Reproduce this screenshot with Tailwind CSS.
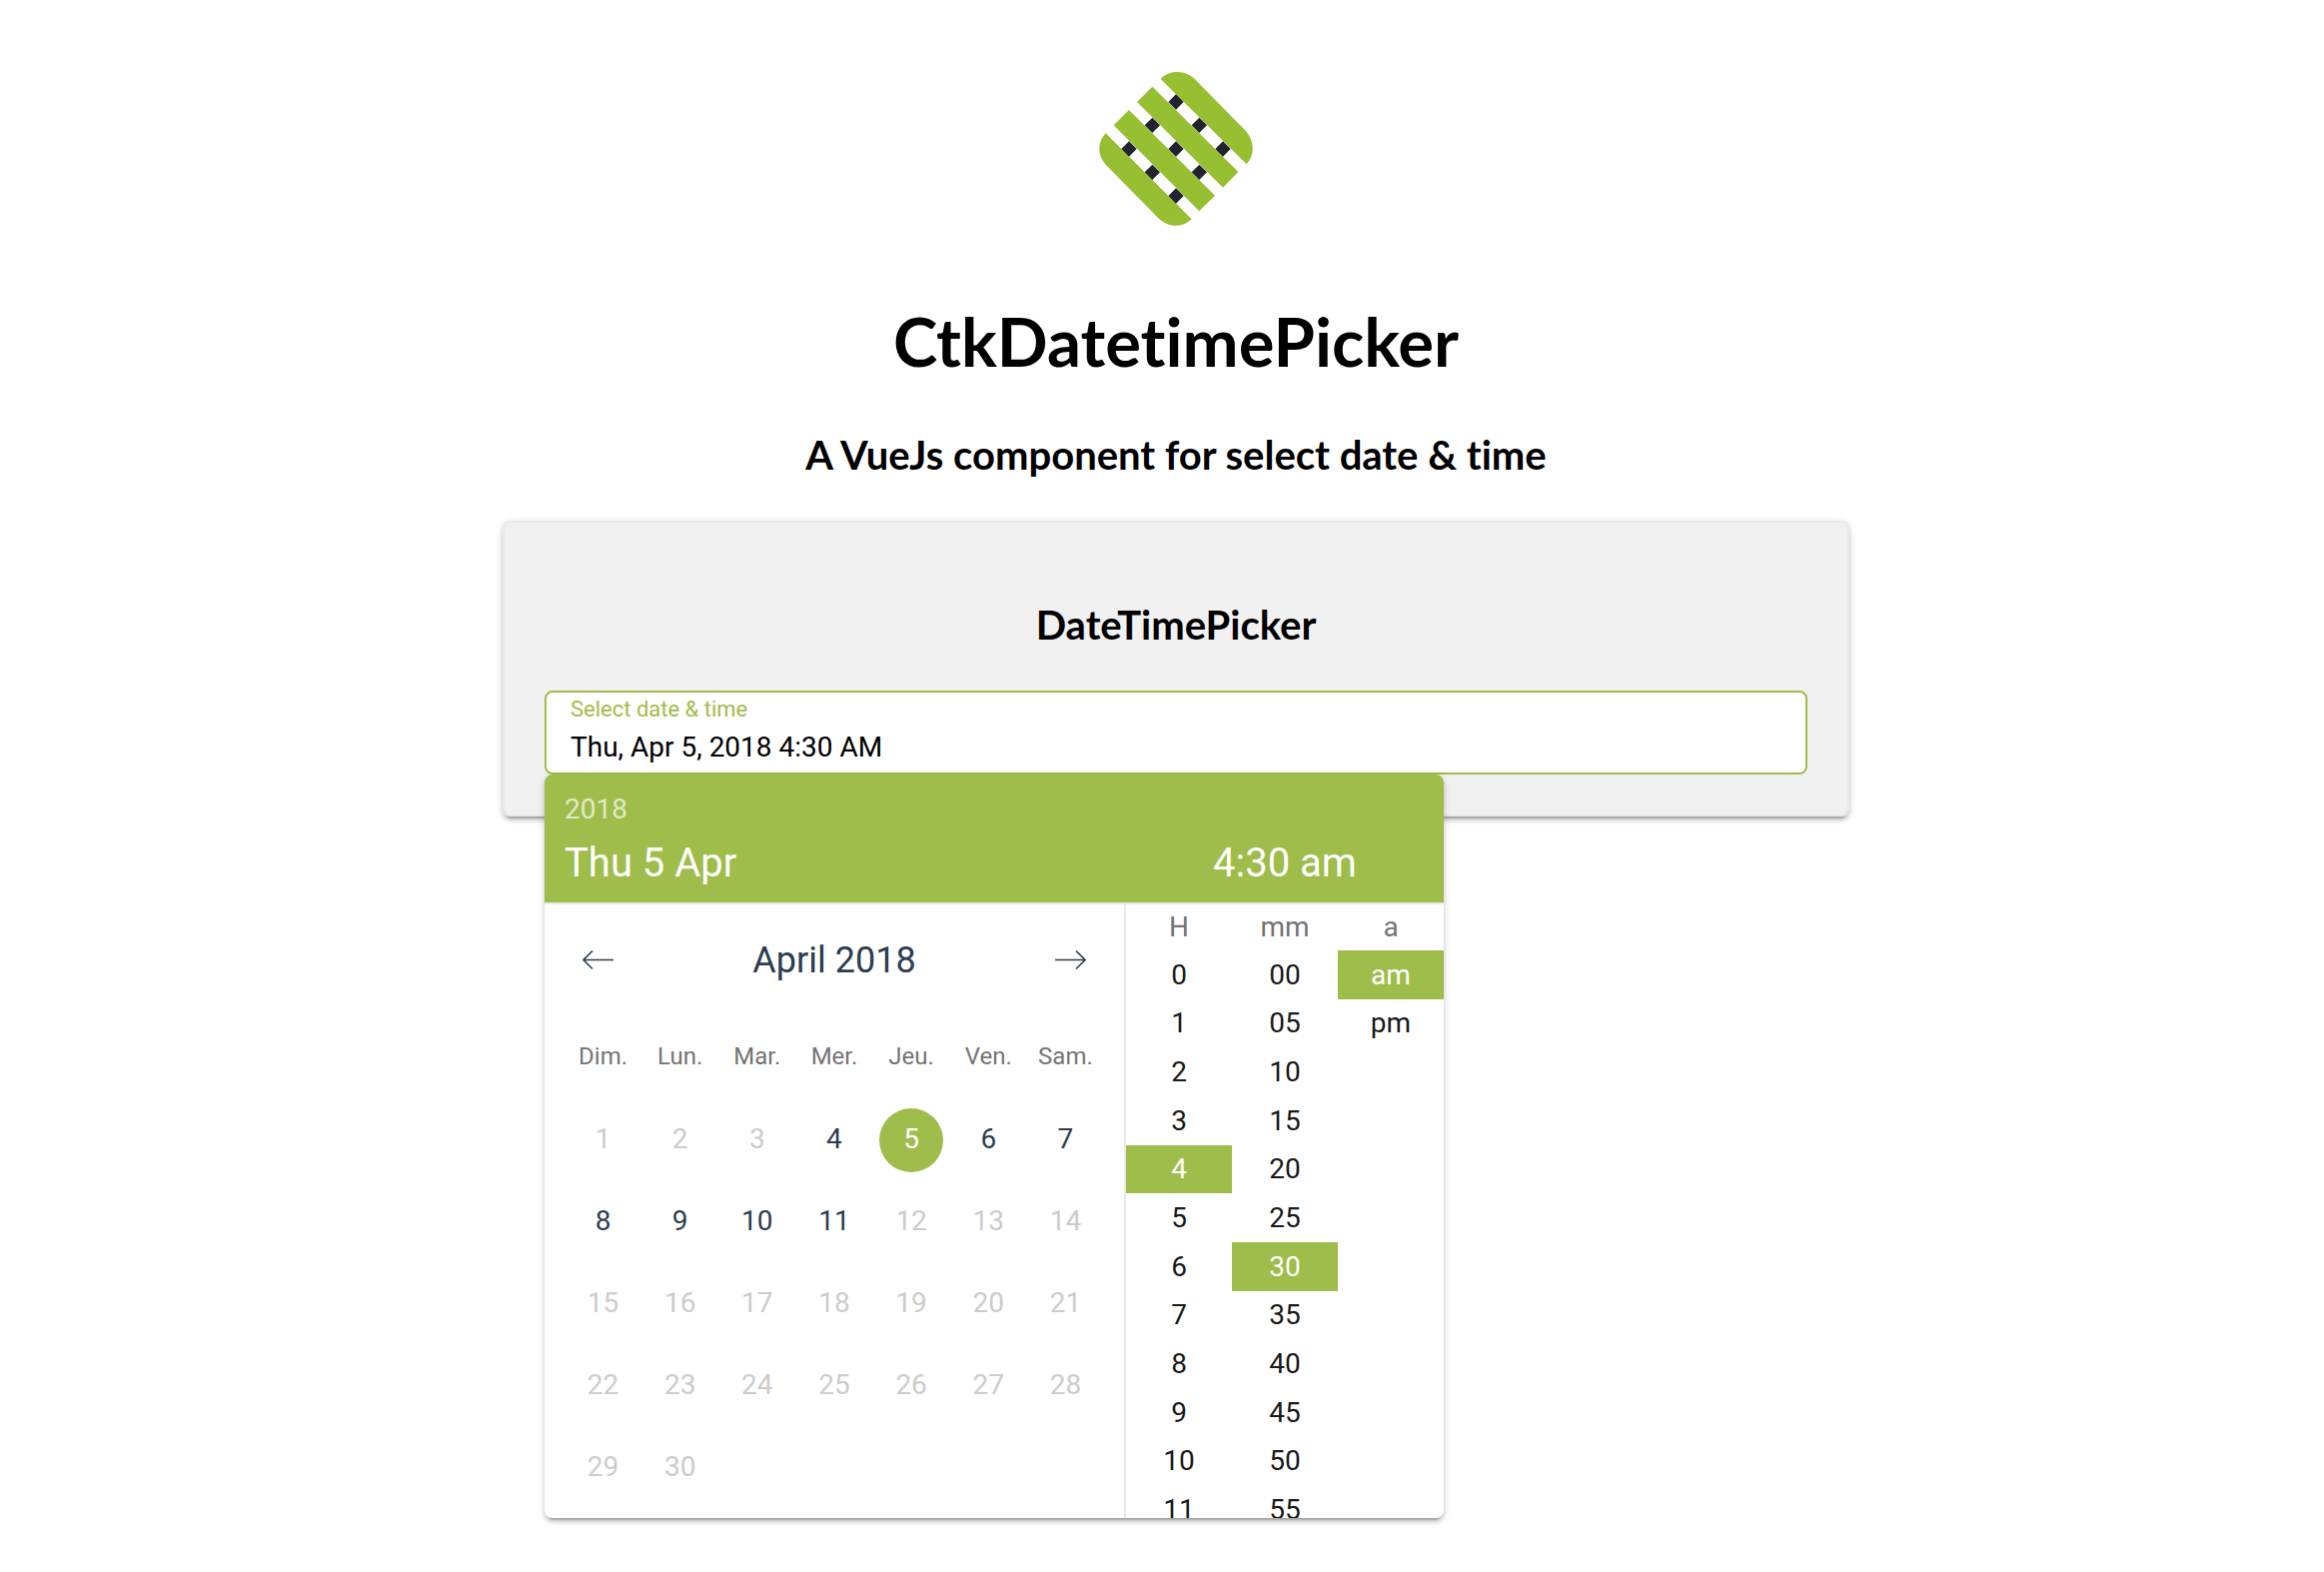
<!DOCTYPE html>
<html lang="en">
<head>
<meta charset="utf-8">
<meta name="viewport" content="width=device-width, initial-scale=1">
<title>CtkDatetimePicker</title>
<script src="https://cdn.jsdelivr.net/npm/@tailwindcss/browser@4"></script>
</head>
<body class="min-h-screen bg-white pl-7 font-['Roboto',sans-serif] text-black">
<main class="mx-auto flex w-full max-w-[1348px] flex-col items-center pt-[72px] [font-variant-ligatures:none]">
  <svg class="size-[154px]" viewBox="60 66 462 462" role="img" aria-label="Logo">
    <g fill="#96bf31">
      <path d="M245 87C272 58 320 60 350 90C400 142 450 192 495 237C527 269 530 312 503 343Z"/>
      <path d="M220 110L478 366L432 413L174 156Z"/>
      <path d="M150 180L408 437L361 484L104 226Z"/>
      <path d="M80 250L338 508C310 535 268 534 238 505L86 350C54 320 53 278 80 250Z"/>
    </g>
    <path fill="#23232f" d="M291 133l23 23-23 23-23-23zM361 203l23 23-23 23-23-23zM432 274l23 23-23 23-23-23zM220 203l23 23-23 23-23-23zM291 274l23 23-23 23-23-23zM361 344l23 23-23 23-23-23zM150 274l23 23-23 23-23-23zM220 344l23 23-23 23-23-23zM291 415l23 23-23 23-23-23z"/>
  </svg>
  <h1 class="mt-[75px] font-['Lato',sans-serif] text-[67px] leading-[80px] font-bold">CtkDatetimePicker</h1>
  <h2 class="mt-[50px] font-['Lato',sans-serif] text-[40px] leading-[48px] font-bold">A VueJs component for select date &amp; time</h2>

  <section class="mt-[42px] w-full rounded-lg border-2 border-[#e9e9e9] bg-[#f1f1f1] px-10 pt-[78px] pb-10 shadow-[0_6px_2px_-4px_rgba(0,0,0,0.2),0_4px_4px_0_rgba(0,0,0,0.14),0_2px_10px_0_rgba(0,0,0,0.12)]">
    <h3 class="text-center font-['Lato',sans-serif] text-[40px] leading-[48px] font-bold">DateTimePicker</h3>
    <div class="relative mt-[42px]">
      <div class="flex h-[84px] flex-col rounded-lg border-2 border-[#9fbd4b] bg-white px-6 pt-1">
        <label for="datetime" class="text-[22px] leading-[26px] text-[#9fbd4b]">Select date &amp; time</label>
        <input id="datetime" type="text" readonly value="Thu, Apr 5, 2018 4:30 AM" class="mt-2 w-full text-[28px] leading-[34px] outline-none">
      </div>

      <div class="absolute top-full left-0 w-[900px] overflow-hidden rounded-lg bg-white shadow-[0_6px_2px_-4px_rgba(0,0,0,0.2),0_4px_4px_0_rgba(0,0,0,0.14),0_2px_10px_0_rgba(0,0,0,0.12)]">
        <header class="flex h-[130px] flex-col border-b-2 border-[#e9e9e9] bg-[#9fbd4b] pt-[18px] text-white">
          <div class="px-5 text-[28px] leading-[34px] text-white/70">2018</div>
          <div class="mt-[13px] flex text-[40px] leading-[48px]">
            <div class="flex-1 pl-5">Thu 5 Apr</div>
            <div class="w-[318px] text-center">4:30 am</div>
          </div>
        </header>
        <div class="flex h-[614px]">
          <div class="flex-1 border-r-2 border-[#e9e9e9] px-5 text-[#34495e]">
            <div class="flex h-28 items-center justify-between px-4">
              <button type="button" aria-label="Previous month" class="flex size-9 items-center justify-center">
                <svg class="h-5 w-8" viewBox="0 0 32 20" fill="none" stroke="#2c3e50" stroke-width="1.6"><path d="M31 9.5H1M10 .5L1 9.5L10 18.5"/></svg>
              </button>
              <div class="text-[36px] leading-[44px] text-[#2c3e50]">April 2018</div>
              <button type="button" aria-label="Next month" class="flex size-9 items-center justify-center">
                <svg class="h-5 w-8" viewBox="0 0 32 20" fill="none" stroke="#2c3e50" stroke-width="1.6"><path d="M1 9.5H31M22 .5L31 9.5L22 18.5"/></svg>
              </button>
            </div>
            <div id="weekdays" class="grid h-20 grid-cols-7 items-center text-center text-[24px] leading-7 text-[#757575]"></div>
            <div id="days" class="grid grid-cols-7 pt-[3px]"></div>
          </div>
          <div id="times" class="grid w-[318px] grid-cols-3 text-center text-[28px] leading-[34px]"></div>
        </div>
      </div>
    </div>
  </section>
</main>
<script>
  const weekdays = ['Dim.', 'Lun.', 'Mar.', 'Mer.', 'Jeu.', 'Ven.', 'Sam.'];
  document.getElementById('weekdays').innerHTML = weekdays.map(d => `<span>${d}</span>`).join('');

  const dayClass = {
    off: 'size-16 rounded-full text-[28px] leading-[34px] pb-[2px] text-[#cccccc]',
    on: 'size-16 rounded-full text-[28px] leading-[34px] pb-[2px] text-[#2c3e50]',
    selected: 'size-16 rounded-full text-[28px] leading-[34px] pb-[2px] bg-[#9fbd4b] text-white',
  };
  let days = '';
  for (let d = 1; d <= 30; d++) {
    const state = d === 5 ? 'selected' : d >= 4 && d <= 11 ? 'on' : 'off';
    days += `<div class="flex h-[82px] items-center justify-center"><button type="button" class="${dayClass[state]}"${state === 'off' ? ' disabled' : ''}>${d}</button></div>`;
  }
  document.getElementById('days').innerHTML = days;

  const columns = [
    { head: 'H', items: [...Array(12).keys()].map(String), selected: '4' },
    { head: 'mm', items: [...Array(12).keys()].map(n => String(n * 5).padStart(2, '0')), selected: '30' },
    { head: 'a', items: ['am', 'pm'], selected: 'am' },
  ];
  document.getElementById('times').innerHTML = columns.map(c => `
    <div>
      <div class="flex h-[46px] items-center justify-center text-[#757575]">${c.head}</div>
      <div class="grid h-[584px] grid-rows-12">${c.items.map(i =>
        `<button type="button" class="pt-px ${i === c.selected ? 'bg-[#9fbd4b] text-white' : 'text-[#1a1a1a]'}">${i}</button>`).join('')}</div>
    </div>`).join('');
</script>
</body>
</html>
